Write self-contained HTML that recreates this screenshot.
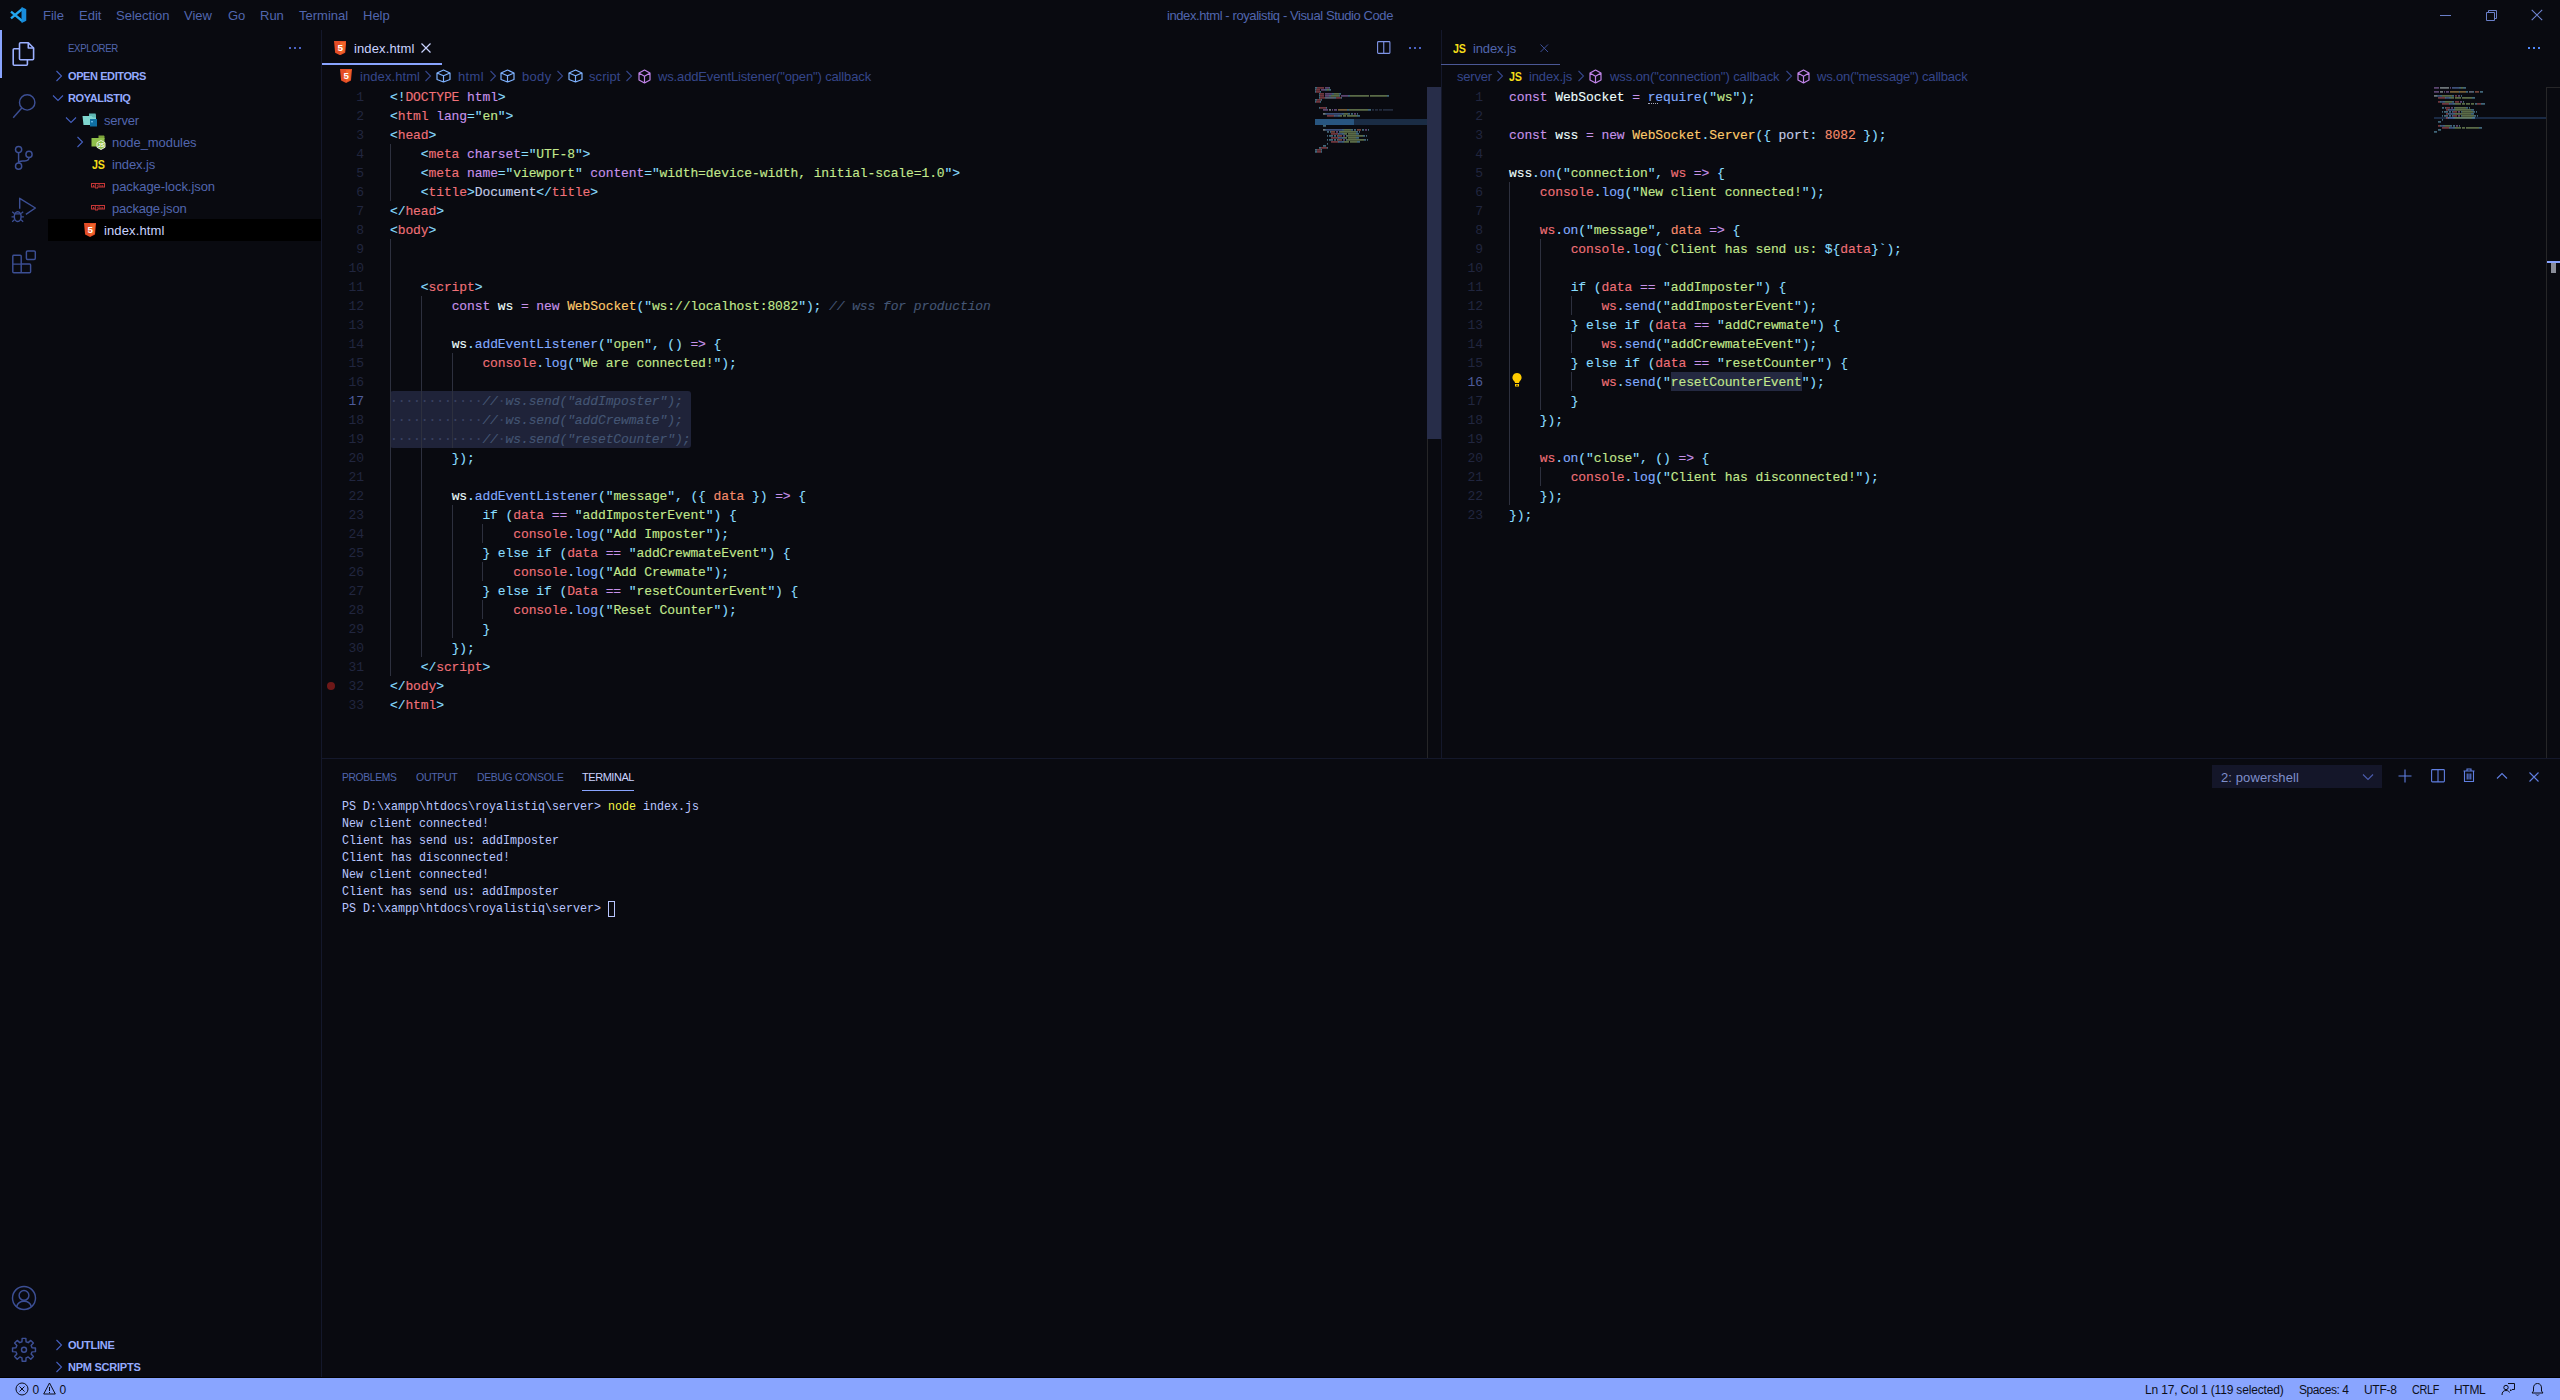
<!DOCTYPE html>
<html lang="en"><head><meta charset="utf-8"><title>index.html - royalistiq - Visual Studio Code</title>
<style>
*{margin:0;padding:0;box-sizing:border-box}
html,body{width:2560px;height:1400px;overflow:hidden;background:#090a10}
body{font-family:"Liberation Sans",sans-serif;font-size:13px;color:#5166ae;position:relative}
#r{position:absolute;left:0;top:0;width:2560px;height:1400px;overflow:hidden}
#r div,#r span,#r svg,#r pre{position:absolute;white-space:pre}
i{font-style:normal}
.ui{font-size:13px}
.b11{font-size:11px;font-weight:bold;color:#94aaff}
.s11{font-size:11px}
.s12{font-size:12px}
pre.code{font-family:"Liberation Mono",monospace;font-size:13px;letter-spacing:-0.1px;line-height:19px;color:#c5cde8;-webkit-text-stroke:0.120px}
pre.ln{font-family:"Liberation Mono",monospace;font-size:13px;letter-spacing:-0.1px;line-height:19px;color:#21263f;text-align:right;width:40px}
pre.ln i{color:#4e5c9c}
pre.term{font-family:"Liberation Mono",monospace;font-size:13.500px;line-height:17px;color:#b9c6ff;transform:scaleX(.8640);transform-origin:0 0}
.p{color:#89ddff}.r{color:#f07178}.k{color:#c792ea}.s{color:#c3e88d}.f{color:#82aaff}.y{color:#ffcb6b}
.n{color:#f78c6c}.w{color:#eeffff}.o{color:#f78c6c}.cm{color:#445674;font-style:italic}.t{color:#c5cde8}.ws{color:#3a4262}
</style></head>
<body><div id="r">
<span class="ui" style="left:43px;top:6px;line-height:20px;">File</span>
<span class="ui" style="left:79px;top:6px;line-height:20px;">Edit</span>
<span class="ui" style="left:116px;top:6px;line-height:20px;">Selection</span>
<span class="ui" style="left:184px;top:6px;line-height:20px;">View</span>
<span class="ui" style="left:228px;top:6px;line-height:20px;">Go</span>
<span class="ui" style="left:260px;top:6px;line-height:20px;">Run</span>
<span class="ui" style="left:299px;top:6px;line-height:20px;">Terminal</span>
<span class="ui" style="left:363px;top:6px;line-height:20px;">Help</span>
<span class="ui" style="left:1167px;top:6px;line-height:20px;letter-spacing:-0.409px;">index.html - royalistiq - Visual Studio Code</span>
<svg style="left:9px;top:6px;" width="18" height="18" viewBox="0 0 18 18"><path d="M13.200 3 2 12.300M13.200 15 2 5.700" stroke="#22a7f0" stroke-width="2.300" stroke-linecap="butt"/><path d="M12.600 1 17.200 3.200V14.800L12.600 17z" fill="#1f9cf0"/><path d="M12.600 1 17.200 3.200V14.800L12.600 17z" fill="#0c6fb8" opacity=".35"/></svg>
<svg style="left:2439px;top:9px;" width="12" height="12" viewBox="0 0 12 12"><path d="M1 6.500h11" stroke="#6a7fc8" stroke-width="1"/></svg>
<svg style="left:2485px;top:9px;" width="13" height="13" viewBox="0 0 13 13"><path d="M1.500 3.500h8v8h-8z M3.500 3.500v-2h8v8h-2" fill="none" stroke="#6a7fc8" stroke-width="1"/></svg>
<svg style="left:2531px;top:9px;" width="12" height="12" viewBox="0 0 12 12"><path d="M.700 .800l10.500 10.400M11.200 .800l-10.500 10.400" stroke="#7085d2" stroke-width="1.100"/></svg>
<div style="left:0px;top:30px;width:2px;height:48px;background:#89a4ff;"></div>
<svg style="left:0;top:30px" width="48" height="1348" viewBox="0 30 48 1348"><g fill="none" stroke="#9bb0ff" stroke-width="1.6" stroke-linejoin="round"><path d="M28.3 42.7h-7.800a1 1 0 0 0-1 1v15a1 1 0 0 0 1 1h12.100a1 1 0 0 0 1-1v-10.700z"/><path d="M28.300 42.700v5.300h5.300"/><path d="M19.500 48.700h-5.300a1 1 0 0 0-1 1v14.600a1 1 0 0 0 1 1h12.200a1 1 0 0 0 1-1v-4.600"/></g><g fill="none" stroke="#3c4f94" stroke-width="1.45"><circle cx="27.200" cy="102.400" r="7.700"/><path d="M21.800 108 13.200 117.700"/><circle cx="18.600" cy="149.600" r="3.100"/><circle cx="18.600" cy="166.200" r="3.100"/><circle cx="29" cy="154.400" r="3.100"/><path d="M18.600 152.800v10.200M29 157.600c0 2.600-1.800 3.300-4.300 3.300h-2c-2.200 0-4 .8-4 2.300"/><path d="M19.700 208.700V198.300L35.400 208 25.900 214.300" stroke-linejoin="round"/><ellipse cx="17.700" cy="216.600" rx="3.400" ry="4.900"/><path d="M14.600 213.800h6.200M14.300 213.500 12.200 211.700M14.200 216.800H11.500M14.400 219.800 12.200 221.800M21.100 213.500 23.200 211.700M21.200 216.800H23.900M21 219.800 23.200 221.800" stroke-width="1.200"/><path d="M13.800 255.300h6.400a1 1 0 0 1 1 1v7.800h8.400a1 1 0 0 1 1 1v6.600a1 1 0 0 1-1 1H13.800a1 1 0 0 1-1-1V256.300a1 1 0 0 1 1-1zM12.800 264.100h8.400v8.600"/><rect x="26.400" y="250.900" width="8.900" height="8.500" rx="1.200"/><circle cx="24" cy="1298" r="11.500"/><circle cx="24" cy="1295.400" r="4.900"/><path d="M16.600 1306.700c1-3.400 3.900-5.400 7.400-5.400s6.400 2 7.400 5.400"/><path d="M22.15 1338.35L25.85 1338.35L26.05 1341.76L28.23 1342.66L30.79 1340.40L33.40 1343.01L31.14 1345.57L32.04 1347.75L35.45 1347.95L35.45 1351.65L32.04 1351.85L31.14 1354.03L33.40 1356.59L30.79 1359.20L28.23 1356.94L26.05 1357.84L25.85 1361.25L22.15 1361.25L21.95 1357.84L19.77 1356.94L17.21 1359.20L14.60 1356.59L16.86 1354.03L15.96 1351.85L12.55 1351.65L12.55 1347.95L15.96 1347.75L16.86 1345.57L14.60 1343.01L17.21 1340.40L19.77 1342.66L21.95 1341.76Z" stroke-linejoin="round"/><circle cx="24" cy="1349.800" r="2.500"/></g></svg>
<div style="left:321px;top:30px;width:1px;height:1348px;background:#14182b;"></div>
<span class="s11" style="left:68px;top:38px;line-height:20px;letter-spacing:-0.35px;transform:scaleX(0.8755);transform-origin:0 50%;">EXPLORER</span>
<svg style="left:289px;top:46.5px;" width="13" height="2" viewBox="0 0 13 2"><path d="M0 1h2M5 1h2M10 1h2" stroke="#4a62c4" stroke-width="1.800"/></svg>
<svg style="left:55px;top:70px;" width="8" height="12" viewBox="0 0 8 12"><path d="M1.500 1 6.500 6 1.500 11" fill="none" stroke="#4560c0" stroke-width="1.1"/></svg>
<span class="b11" style="left:68px;top:66px;line-height:20px;letter-spacing:-0.410px;">OPEN EDITORS</span>
<svg style="left:52px;top:94px;" width="12" height="8" viewBox="0 0 12 8"><path d="M1 1.500 6 6.500 11 1.500" fill="none" stroke="#4560c0" stroke-width="1.1"/></svg>
<span class="b11" style="left:68px;top:88px;line-height:20px;letter-spacing:-0.372px;">ROYALISTIQ</span>
<svg style="left:65px;top:116px;" width="12" height="8" viewBox="0 0 12 8"><path d="M1 1.500 6 6.500 11 1.500" fill="none" stroke="#4560c0" stroke-width="1.1"/></svg>
<span class="ui" style="left:104px;top:111px;line-height:20px;letter-spacing:-0.186px;">server</span>
<svg style="left:76px;top:136px;" width="8" height="12" viewBox="0 0 8 12"><path d="M1.500 1 6.500 6 1.500 11" fill="none" stroke="#4560c0" stroke-width="1.1"/></svg>
<span class="ui" style="left:112px;top:133px;line-height:20px;letter-spacing:-0.066px;">node_modules</span>
<span class="ui" style="left:112px;top:155px;line-height:20px;letter-spacing:-0.135px;">index.js</span>
<span class="ui" style="left:112px;top:177px;line-height:20px;letter-spacing:-0.062px;">package-lock.json</span>
<span class="ui" style="left:112px;top:199px;line-height:20px;letter-spacing:-0.176px;">package.json</span>
<div style="left:48px;top:219px;width:273px;height:22px;background:#000000;"></div>
<span class="ui" style="left:104px;top:221px;line-height:20px;color:#c9d3ff;letter-spacing:0.125px;">index.html</span>
<svg style="left:55px;top:1339px;" width="8" height="12" viewBox="0 0 8 12"><path d="M1.500 1 6.500 6 1.500 11" fill="none" stroke="#4560c0" stroke-width="1.1"/></svg>
<span class="b11" style="left:68px;top:1335px;line-height:20px;letter-spacing:-0.254px;">OUTLINE</span>
<svg style="left:55px;top:1361px;" width="8" height="12" viewBox="0 0 8 12"><path d="M1.500 1 6.500 6 1.500 11" fill="none" stroke="#4560c0" stroke-width="1.1"/></svg>
<span class="b11" style="left:68px;top:1357px;line-height:20px;letter-spacing:-0.243px;">NPM SCRIPTS</span>
<svg style="left:82px;top:112px;" width="16" height="15" viewBox="0 0 16 15"><path d="M7 1.500h6.500l.5 1.500v3H7z" fill="#5fb7b3"/><path d="M.500 4h9l1.500 1.500h3v7.500H1.500z" fill="#7fd6cf"/><path d="M8 7h7v7.500H8z" fill="#0f6fa3"/><rect x="9.300" y="9" width="1.400" height="1.400" fill="#8ad4ff"/></svg>
<svg style="left:91px;top:134px;" width="16" height="16" viewBox="0 0 16 16"><path d="M7.500 1.500H13l.5 1v2.500h-6z" fill="#7da23a"/><path d="M.500 4h13v8.500H.500z" fill="#8fc04b"/><path d="M10 6.500l4 2.200v4.600l-4 2.200-4-2.200V8.700z" fill="#8fc04b" stroke="#e8f0d8" stroke-width="1"/><text x="10" y="13" font-size="5" font-family="Liberation Sans,sans-serif" font-weight="bold" text-anchor="middle" fill="#fff">JS</text></svg>
<span class="" style="left:92px;top:155px;line-height:20px;font-size:12px;font-weight:bold;color:#f5de19;letter-spacing:-0.35px;transform:scaleX(0.8943);transform-origin:0 50%;">JS</span>
<svg style="left:91px;top:183px;" width="14" height="6" viewBox="0 0 14 6"><path d="M0 0h14v4.500H7v1H4v-1H0z" fill="#c63636"/><path d="M1 1h2.800v2.600h-.9V1.900h-.9v1.700H1z M4.800 1h2.800v2.600H6.200v.9H4.800z M8.500 1H13v2.600h-.9V1.900h-.8v1.700h-.9V1.900h-.9v1.700h-1z" fill="#090a10"/><rect x="5.900" y="1.900" width=".8" height=".9" fill="#c63636"/></svg>
<svg style="left:91px;top:205px;" width="14" height="6" viewBox="0 0 14 6"><path d="M0 0h14v4.500H7v1H4v-1H0z" fill="#c63636"/><path d="M1 1h2.800v2.600h-.9V1.900h-.9v1.700H1z M4.800 1h2.800v2.600H6.200v.9H4.800z M8.500 1H13v2.600h-.9V1.900h-.8v1.700h-.9V1.900h-.9v1.700h-1z" fill="#090a10"/><rect x="5.900" y="1.900" width=".8" height=".9" fill="#c63636"/></svg>
<svg style="left:84px;top:223px;" width="12.09" height="13.95" viewBox="0 0 13 15"><path d="M0 0h13l-1.200 12.500L6.500 15 1.200 12.500z" fill="#e44d26"/><path d="M6.500 1v12.800l4.300-2.100L11.800 1z" fill="#f16529"/><text x="6.600" y="11" font-family="Liberation Sans,sans-serif" font-weight="bold" font-size="10.500" text-anchor="middle" fill="#fff">5</text></svg>
<div style="left:322px;top:63px;width:120px;height:2px;background:#89a4ff;"></div>
<svg style="left:334px;top:41px;" width="12.35" height="14.25" viewBox="0 0 13 15"><path d="M0 0h13l-1.200 12.500L6.500 15 1.200 12.500z" fill="#e44d26"/><path d="M6.500 1v12.800l4.300-2.100L11.800 1z" fill="#f16529"/><text x="6.600" y="11" font-family="Liberation Sans,sans-serif" font-weight="bold" font-size="10.500" text-anchor="middle" fill="#fff">5</text></svg>
<span class="ui" style="left:354px;top:39px;line-height:20px;color:#c9d3ff;letter-spacing:0.125px;">index.html</span>
<svg style="left:421px;top:43px;" width="10" height="10" viewBox="0 0 10 10"><path d="M.500 .500l9 9M9.500 .500l-9 9" stroke="#c9d3ff" stroke-width="1.200"/></svg>
<svg style="left:1377px;top:41px;" width="14" height="13" viewBox="0 0 14 13"><rect x=".600" y=".600" width="12.300" height="11.800" rx=".8" fill="none" stroke="#7f95e8" stroke-width="1.1"/><path d="M6.750 .600v11.800" stroke="#7f95e8" stroke-width="1.1"/></svg>
<svg style="left:1409px;top:47px;" width="13" height="2" viewBox="0 0 13 2"><path d="M0 1h2M5 1h2M10 1h2" stroke="#4a62c4" stroke-width="1.800"/></svg>
<svg style="left:340px;top:69px;" width="12.09" height="13.95" viewBox="0 0 13 15"><path d="M0 0h13l-1.200 12.500L6.500 15 1.200 12.500z" fill="#e44d26"/><path d="M6.500 1v12.800l4.300-2.100L11.800 1z" fill="#f16529"/><text x="6.600" y="11" font-family="Liberation Sans,sans-serif" font-weight="bold" font-size="10.500" text-anchor="middle" fill="#fff">5</text></svg>
<span class="ui" style="left:360px;top:67px;line-height:20px;color:#35468a;letter-spacing:0.075px;">index.html</span>
<svg style="left:424px;top:70px;" width="8" height="12" viewBox="0 0 8 12"><path d="M1.500 1 6.500 6 1.500 11" fill="none" stroke="#35468a" stroke-width="1.1"/></svg>
<svg style="left:436px;top:69px;" width="15" height="14" viewBox="0 0 15 14"><path d="M7.500 1 14 4v6.500L7.500 13 1 10.500V4z M1 4l6.500 2.800L14 4 M7.500 6.800V13" fill="none" stroke="#7fb2ff" stroke-width="1.200" stroke-linejoin="round"/></svg>
<span class="ui" style="left:458px;top:67px;line-height:20px;color:#35468a;letter-spacing:0.360px;">html</span>
<svg style="left:489px;top:70px;" width="8" height="12" viewBox="0 0 8 12"><path d="M1.500 1 6.500 6 1.500 11" fill="none" stroke="#35468a" stroke-width="1.1"/></svg>
<svg style="left:500px;top:69px;" width="15" height="14" viewBox="0 0 15 14"><path d="M7.500 1 14 4v6.500L7.500 13 1 10.500V4z M1 4l6.500 2.800L14 4 M7.500 6.800V13" fill="none" stroke="#7fb2ff" stroke-width="1.200" stroke-linejoin="round"/></svg>
<span class="ui" style="left:522px;top:67px;line-height:20px;color:#35468a;letter-spacing:0.327px;">body</span>
<svg style="left:556px;top:70px;" width="8" height="12" viewBox="0 0 8 12"><path d="M1.500 1 6.500 6 1.500 11" fill="none" stroke="#35468a" stroke-width="1.1"/></svg>
<svg style="left:568px;top:69px;" width="15" height="14" viewBox="0 0 15 14"><path d="M7.500 1 14 4v6.500L7.500 13 1 10.500V4z M1 4l6.500 2.800L14 4 M7.500 6.800V13" fill="none" stroke="#7fb2ff" stroke-width="1.200" stroke-linejoin="round"/></svg>
<span class="ui" style="left:589px;top:67px;line-height:20px;color:#35468a;letter-spacing:0.073px;">script</span>
<svg style="left:625px;top:70px;" width="8" height="12" viewBox="0 0 8 12"><path d="M1.500 1 6.500 6 1.500 11" fill="none" stroke="#35468a" stroke-width="1.1"/></svg>
<svg style="left:638px;top:68.5px;" width="13" height="15" viewBox="0 0 13 15"><path d="M6.500 1l5.500 3.100v6.800L6.500 14 1 10.900V4.100z M1 4.100l5.500 3.200 5.500-3.200 M6.500 7.300V14" fill="none" stroke="#c084e8" stroke-width="1.200" stroke-linejoin="round"/></svg>
<span class="ui" style="left:658px;top:67px;line-height:20px;color:#35468a;letter-spacing:-0.141px;">ws.addEventListener("open") callback</span>
<div style="left:390px;top:391px;width:301px;height:57px;background:#1f2339;border-radius:3px"></div>
<div style="left:390px;top:144px;width:1px;height:57px;background:#2d303e;"></div>
<div style="left:390px;top:239px;width:1px;height:437px;background:#2d303e;"></div>
<div style="left:421px;top:296px;width:1px;height:361px;background:#2d303e;"></div>
<div style="left:452px;top:353px;width:1px;height:95px;background:#2d303e;"></div>
<div style="left:452px;top:505px;width:1px;height:133px;background:#2d303e;"></div>
<div style="left:482px;top:524px;width:1px;height:19px;background:#2d303e;"></div>
<div style="left:482px;top:562px;width:1px;height:19px;background:#2d303e;"></div>
<div style="left:482px;top:600px;width:1px;height:19px;background:#2d303e;"></div>
<pre class="code" style="left:390px;top:88px"><i class="p">&lt;!</i><i class="r">DOCTYPE</i> <i class="k">html</i><i class="p">&gt;</i>
<i class="p">&lt;</i><i class="r">html</i> <i class="k">lang</i><i class="p">="</i><i class="s">en</i><i class="p">"&gt;</i>
<i class="p">&lt;</i><i class="r">head</i><i class="p">&gt;</i>
    <i class="p">&lt;</i><i class="r">meta</i> <i class="k">charset</i><i class="p">="</i><i class="s">UTF-8</i><i class="p">"&gt;</i>
    <i class="p">&lt;</i><i class="r">meta</i> <i class="k">name</i><i class="p">="</i><i class="s">viewport</i><i class="p">"</i> <i class="k">content</i><i class="p">="</i><i class="s">width=device-width, initial-scale=1.0</i><i class="p">"&gt;</i>
    <i class="p">&lt;</i><i class="r">title</i><i class="p">&gt;</i><i class="t">Document</i><i class="p">&lt;/</i><i class="r">title</i><i class="p">&gt;</i>
<i class="p">&lt;/</i><i class="r">head</i><i class="p">&gt;</i>
<i class="p">&lt;</i><i class="r">body</i><i class="p">&gt;</i>


    <i class="p">&lt;</i><i class="r">script</i><i class="p">&gt;</i>
        <i class="k">const</i> <i class="w">ws</i> <i class="k">=</i> <i class="k">new</i> <i class="y">WebSocket</i><i class="p">("</i><i class="s">ws://localhost:8082</i><i class="p">");</i> <i class="cm">// wss for production</i>

        <i class="w">ws</i><i class="p">.</i><i class="f">addEventListener</i><i class="p">("</i><i class="s">open</i><i class="p">",</i> <i class="p">()</i> <i class="k">=&gt;</i> <i class="p">{</i>
            <i class="r">console</i><i class="p">.</i><i class="f">log</i><i class="p">("</i><i class="s">We are connected!</i><i class="p">");</i>

<i class="ws">············</i><i class="cm">//</i><i class="ws">·</i><i class="cm">ws.send("addImposter");</i>
<i class="ws">············</i><i class="cm">//</i><i class="ws">·</i><i class="cm">ws.send("addCrewmate");</i>
<i class="ws">············</i><i class="cm">//</i><i class="ws">·</i><i class="cm">ws.send("resetCounter");</i>
        <i class="p">});</i>

        <i class="w">ws</i><i class="p">.</i><i class="f">addEventListener</i><i class="p">("</i><i class="s">message</i><i class="p">",</i> <i class="p">({</i> <i class="o">data</i> <i class="p">})</i> <i class="k">=&gt;</i> <i class="p">{</i>
            <i class="p">if</i> <i class="p">(</i><i class="r">data</i> <i class="k">==</i> <i class="p">"</i><i class="s">addImposterEvent</i><i class="p">")</i> <i class="p">{</i>
                <i class="r">console</i><i class="p">.</i><i class="f">log</i><i class="p">("</i><i class="s">Add Imposter</i><i class="p">");</i>
            <i class="p">}</i> <i class="p">else</i> <i class="p">if</i> <i class="p">(</i><i class="r">data</i> <i class="k">==</i> <i class="p">"</i><i class="s">addCrewmateEvent</i><i class="p">")</i> <i class="p">{</i>
                <i class="r">console</i><i class="p">.</i><i class="f">log</i><i class="p">("</i><i class="s">Add Crewmate</i><i class="p">");</i>
            <i class="p">}</i> <i class="p">else</i> <i class="p">if</i> <i class="p">(</i><i class="r">Data</i> <i class="k">==</i> <i class="p">"</i><i class="s">resetCounterEvent</i><i class="p">")</i> <i class="p">{</i>
                <i class="r">console</i><i class="p">.</i><i class="f">log</i><i class="p">("</i><i class="s">Reset Counter</i><i class="p">");</i>
            <i class="p">}</i>
        <i class="p">});</i>
    <i class="p">&lt;/</i><i class="r">script</i><i class="p">&gt;</i>
<i class="p">&lt;/</i><i class="r">body</i><i class="p">&gt;</i>
<i class="p">&lt;/</i><i class="r">html</i><i class="p">&gt;</i></pre>
<pre class="ln" style="left:324px;top:88px">1
2
3
4
5
6
7
8
9
10
11
12
13
14
15
16
<i>17</i>
18
19
20
21
22
23
24
25
26
27
28
29
30
31
32
33</pre>
<div style="left:327px;top:682px;width:8px;height:8px;border-radius:4px;background:#6e1818"></div>
<svg style="left:1315px;top:87px;" width="112" height="70" viewBox="0 0 112 70"><g opacity=".55"><rect x="0" y="0.2" width="2" height="1.400" fill="#89ddff"/><rect x="2" y="0.2" width="7" height="1.400" fill="#f07178"/><rect x="10" y="0.2" width="4" height="1.400" fill="#c792ea"/><rect x="14" y="0.2" width="1" height="1.400" fill="#89ddff"/><rect x="0" y="2.2" width="1" height="1.400" fill="#89ddff"/><rect x="1" y="2.2" width="4" height="1.400" fill="#f07178"/><rect x="6" y="2.2" width="4" height="1.400" fill="#c792ea"/><rect x="10" y="2.2" width="1" height="1.400" fill="#89ddff"/><rect x="11" y="2.2" width="1" height="1.400" fill="#89ddff"/><rect x="12" y="2.2" width="2" height="1.400" fill="#c3e88d"/><rect x="14" y="2.2" width="1" height="1.400" fill="#89ddff"/><rect x="15" y="2.2" width="1" height="1.400" fill="#89ddff"/><rect x="0" y="4.2" width="1" height="1.400" fill="#89ddff"/><rect x="1" y="4.2" width="4" height="1.400" fill="#f07178"/><rect x="5" y="4.2" width="1" height="1.400" fill="#89ddff"/><rect x="4" y="6.2" width="1" height="1.400" fill="#89ddff"/><rect x="5" y="6.2" width="4" height="1.400" fill="#f07178"/><rect x="10" y="6.2" width="7" height="1.400" fill="#c792ea"/><rect x="17" y="6.2" width="1" height="1.400" fill="#89ddff"/><rect x="18" y="6.2" width="1" height="1.400" fill="#89ddff"/><rect x="19" y="6.2" width="5" height="1.400" fill="#c3e88d"/><rect x="24" y="6.2" width="1" height="1.400" fill="#89ddff"/><rect x="25" y="6.2" width="1" height="1.400" fill="#89ddff"/><rect x="4" y="8.2" width="1" height="1.400" fill="#89ddff"/><rect x="5" y="8.2" width="4" height="1.400" fill="#f07178"/><rect x="10" y="8.2" width="4" height="1.400" fill="#c792ea"/><rect x="14" y="8.2" width="1" height="1.400" fill="#89ddff"/><rect x="15" y="8.2" width="1" height="1.400" fill="#89ddff"/><rect x="16" y="8.2" width="8" height="1.400" fill="#c3e88d"/><rect x="24" y="8.2" width="1" height="1.400" fill="#89ddff"/><rect x="26" y="8.2" width="7" height="1.400" fill="#c792ea"/><rect x="33" y="8.2" width="1" height="1.400" fill="#89ddff"/><rect x="34" y="8.2" width="1" height="1.400" fill="#89ddff"/><rect x="35" y="8.2" width="19" height="1.400" fill="#c3e88d"/><rect x="55" y="8.2" width="17" height="1.400" fill="#c3e88d"/><rect x="72" y="8.2" width="1" height="1.400" fill="#89ddff"/><rect x="73" y="8.2" width="1" height="1.400" fill="#89ddff"/><rect x="4" y="10.2" width="1" height="1.400" fill="#89ddff"/><rect x="5" y="10.2" width="5" height="1.400" fill="#f07178"/><rect x="10" y="10.2" width="1" height="1.400" fill="#89ddff"/><rect x="11" y="10.2" width="8" height="1.400" fill="#c5cde8"/><rect x="19" y="10.2" width="2" height="1.400" fill="#89ddff"/><rect x="21" y="10.2" width="5" height="1.400" fill="#f07178"/><rect x="26" y="10.2" width="1" height="1.400" fill="#89ddff"/><rect x="0" y="12.2" width="2" height="1.400" fill="#89ddff"/><rect x="2" y="12.2" width="4" height="1.400" fill="#f07178"/><rect x="6" y="12.2" width="1" height="1.400" fill="#89ddff"/><rect x="0" y="14.2" width="1" height="1.400" fill="#89ddff"/><rect x="1" y="14.2" width="4" height="1.400" fill="#f07178"/><rect x="5" y="14.2" width="1" height="1.400" fill="#89ddff"/><rect x="4" y="20.2" width="1" height="1.400" fill="#89ddff"/><rect x="5" y="20.2" width="6" height="1.400" fill="#f07178"/><rect x="11" y="20.2" width="1" height="1.400" fill="#89ddff"/><rect x="8" y="22.2" width="5" height="1.400" fill="#c792ea"/><rect x="14" y="22.2" width="2" height="1.400" fill="#eeffff"/><rect x="17" y="22.2" width="1" height="1.400" fill="#c792ea"/><rect x="19" y="22.2" width="3" height="1.400" fill="#c792ea"/><rect x="23" y="22.2" width="9" height="1.400" fill="#ffcb6b"/><rect x="32" y="22.2" width="1" height="1.400" fill="#89ddff"/><rect x="33" y="22.2" width="1" height="1.400" fill="#89ddff"/><rect x="34" y="22.2" width="19" height="1.400" fill="#c3e88d"/><rect x="53" y="22.2" width="1" height="1.400" fill="#89ddff"/><rect x="54" y="22.2" width="1" height="1.400" fill="#89ddff"/><rect x="55" y="22.2" width="1" height="1.400" fill="#89ddff"/><rect x="57" y="22.2" width="2" height="1.400" fill="#445674"/><rect x="60" y="22.2" width="3" height="1.400" fill="#445674"/><rect x="64" y="22.2" width="3" height="1.400" fill="#445674"/><rect x="68" y="22.2" width="10" height="1.400" fill="#445674"/><rect x="8" y="26.2" width="2" height="1.400" fill="#eeffff"/><rect x="10" y="26.2" width="1" height="1.400" fill="#89ddff"/><rect x="11" y="26.2" width="16" height="1.400" fill="#82aaff"/><rect x="27" y="26.2" width="1" height="1.400" fill="#89ddff"/><rect x="28" y="26.2" width="1" height="1.400" fill="#89ddff"/><rect x="29" y="26.2" width="4" height="1.400" fill="#c3e88d"/><rect x="33" y="26.2" width="1" height="1.400" fill="#89ddff"/><rect x="34" y="26.2" width="1" height="1.400" fill="#89ddff"/><rect x="36" y="26.2" width="1" height="1.400" fill="#89ddff"/><rect x="37" y="26.2" width="1" height="1.400" fill="#89ddff"/><rect x="39" y="26.2" width="2" height="1.400" fill="#c792ea"/><rect x="42" y="26.2" width="1" height="1.400" fill="#89ddff"/><rect x="12" y="28.2" width="7" height="1.400" fill="#f07178"/><rect x="19" y="28.2" width="1" height="1.400" fill="#89ddff"/><rect x="20" y="28.2" width="3" height="1.400" fill="#82aaff"/><rect x="23" y="28.2" width="1" height="1.400" fill="#89ddff"/><rect x="24" y="28.2" width="1" height="1.400" fill="#89ddff"/><rect x="25" y="28.2" width="2" height="1.400" fill="#c3e88d"/><rect x="28" y="28.2" width="3" height="1.400" fill="#c3e88d"/><rect x="32" y="28.2" width="10" height="1.400" fill="#c3e88d"/><rect x="42" y="28.2" width="1" height="1.400" fill="#89ddff"/><rect x="43" y="28.2" width="1" height="1.400" fill="#89ddff"/><rect x="44" y="28.2" width="1" height="1.400" fill="#89ddff"/><rect x="12" y="32.2" width="2" height="1.400" fill="#445674"/><rect x="15" y="32.2" width="23" height="1.400" fill="#445674"/><rect x="12" y="34.2" width="2" height="1.400" fill="#445674"/><rect x="15" y="34.2" width="23" height="1.400" fill="#445674"/><rect x="12" y="36.2" width="2" height="1.400" fill="#445674"/><rect x="15" y="36.2" width="24" height="1.400" fill="#445674"/><rect x="8" y="38.2" width="1" height="1.400" fill="#89ddff"/><rect x="9" y="38.2" width="1" height="1.400" fill="#89ddff"/><rect x="10" y="38.2" width="1" height="1.400" fill="#89ddff"/><rect x="8" y="42.2" width="2" height="1.400" fill="#eeffff"/><rect x="10" y="42.2" width="1" height="1.400" fill="#89ddff"/><rect x="11" y="42.2" width="16" height="1.400" fill="#82aaff"/><rect x="27" y="42.2" width="1" height="1.400" fill="#89ddff"/><rect x="28" y="42.2" width="1" height="1.400" fill="#89ddff"/><rect x="29" y="42.2" width="7" height="1.400" fill="#c3e88d"/><rect x="36" y="42.2" width="1" height="1.400" fill="#89ddff"/><rect x="37" y="42.2" width="1" height="1.400" fill="#89ddff"/><rect x="39" y="42.2" width="1" height="1.400" fill="#89ddff"/><rect x="40" y="42.2" width="1" height="1.400" fill="#89ddff"/><rect x="42" y="42.2" width="4" height="1.400" fill="#f78c6c"/><rect x="47" y="42.2" width="1" height="1.400" fill="#89ddff"/><rect x="48" y="42.2" width="1" height="1.400" fill="#89ddff"/><rect x="50" y="42.2" width="2" height="1.400" fill="#c792ea"/><rect x="53" y="42.2" width="1" height="1.400" fill="#89ddff"/><rect x="12" y="44.2" width="2" height="1.400" fill="#89ddff"/><rect x="15" y="44.2" width="1" height="1.400" fill="#89ddff"/><rect x="16" y="44.2" width="4" height="1.400" fill="#f78c6c"/><rect x="21" y="44.2" width="2" height="1.400" fill="#c792ea"/><rect x="24" y="44.2" width="1" height="1.400" fill="#89ddff"/><rect x="25" y="44.2" width="16" height="1.400" fill="#c3e88d"/><rect x="41" y="44.2" width="1" height="1.400" fill="#89ddff"/><rect x="42" y="44.2" width="1" height="1.400" fill="#89ddff"/><rect x="44" y="44.2" width="1" height="1.400" fill="#89ddff"/><rect x="16" y="46.2" width="7" height="1.400" fill="#f07178"/><rect x="23" y="46.2" width="1" height="1.400" fill="#89ddff"/><rect x="24" y="46.2" width="3" height="1.400" fill="#82aaff"/><rect x="27" y="46.2" width="1" height="1.400" fill="#89ddff"/><rect x="28" y="46.2" width="1" height="1.400" fill="#89ddff"/><rect x="29" y="46.2" width="3" height="1.400" fill="#c3e88d"/><rect x="33" y="46.2" width="8" height="1.400" fill="#c3e88d"/><rect x="41" y="46.2" width="1" height="1.400" fill="#89ddff"/><rect x="42" y="46.2" width="1" height="1.400" fill="#89ddff"/><rect x="43" y="46.2" width="1" height="1.400" fill="#89ddff"/><rect x="12" y="48.2" width="1" height="1.400" fill="#89ddff"/><rect x="14" y="48.2" width="4" height="1.400" fill="#89ddff"/><rect x="19" y="48.2" width="2" height="1.400" fill="#89ddff"/><rect x="22" y="48.2" width="1" height="1.400" fill="#89ddff"/><rect x="23" y="48.2" width="4" height="1.400" fill="#f78c6c"/><rect x="28" y="48.2" width="2" height="1.400" fill="#c792ea"/><rect x="31" y="48.2" width="1" height="1.400" fill="#89ddff"/><rect x="32" y="48.2" width="16" height="1.400" fill="#c3e88d"/><rect x="48" y="48.2" width="1" height="1.400" fill="#89ddff"/><rect x="49" y="48.2" width="1" height="1.400" fill="#89ddff"/><rect x="51" y="48.2" width="1" height="1.400" fill="#89ddff"/><rect x="16" y="50.2" width="7" height="1.400" fill="#f07178"/><rect x="23" y="50.2" width="1" height="1.400" fill="#89ddff"/><rect x="24" y="50.2" width="3" height="1.400" fill="#82aaff"/><rect x="27" y="50.2" width="1" height="1.400" fill="#89ddff"/><rect x="28" y="50.2" width="1" height="1.400" fill="#89ddff"/><rect x="29" y="50.2" width="3" height="1.400" fill="#c3e88d"/><rect x="33" y="50.2" width="8" height="1.400" fill="#c3e88d"/><rect x="41" y="50.2" width="1" height="1.400" fill="#89ddff"/><rect x="42" y="50.2" width="1" height="1.400" fill="#89ddff"/><rect x="43" y="50.2" width="1" height="1.400" fill="#89ddff"/><rect x="12" y="52.2" width="1" height="1.400" fill="#89ddff"/><rect x="14" y="52.2" width="4" height="1.400" fill="#89ddff"/><rect x="19" y="52.2" width="2" height="1.400" fill="#89ddff"/><rect x="22" y="52.2" width="1" height="1.400" fill="#89ddff"/><rect x="23" y="52.2" width="4" height="1.400" fill="#f78c6c"/><rect x="28" y="52.2" width="2" height="1.400" fill="#c792ea"/><rect x="31" y="52.2" width="1" height="1.400" fill="#89ddff"/><rect x="32" y="52.2" width="17" height="1.400" fill="#c3e88d"/><rect x="49" y="52.2" width="1" height="1.400" fill="#89ddff"/><rect x="50" y="52.2" width="1" height="1.400" fill="#89ddff"/><rect x="52" y="52.2" width="1" height="1.400" fill="#89ddff"/><rect x="16" y="54.2" width="7" height="1.400" fill="#f07178"/><rect x="23" y="54.2" width="1" height="1.400" fill="#89ddff"/><rect x="24" y="54.2" width="3" height="1.400" fill="#82aaff"/><rect x="27" y="54.2" width="1" height="1.400" fill="#89ddff"/><rect x="28" y="54.2" width="1" height="1.400" fill="#89ddff"/><rect x="29" y="54.2" width="5" height="1.400" fill="#c3e88d"/><rect x="35" y="54.2" width="7" height="1.400" fill="#c3e88d"/><rect x="42" y="54.2" width="1" height="1.400" fill="#89ddff"/><rect x="43" y="54.2" width="1" height="1.400" fill="#89ddff"/><rect x="44" y="54.2" width="1" height="1.400" fill="#89ddff"/><rect x="12" y="56.2" width="1" height="1.400" fill="#89ddff"/><rect x="8" y="58.2" width="1" height="1.400" fill="#89ddff"/><rect x="9" y="58.2" width="1" height="1.400" fill="#89ddff"/><rect x="10" y="58.2" width="1" height="1.400" fill="#89ddff"/><rect x="4" y="60.2" width="2" height="1.400" fill="#89ddff"/><rect x="6" y="60.2" width="6" height="1.400" fill="#f07178"/><rect x="12" y="60.2" width="1" height="1.400" fill="#89ddff"/><rect x="0" y="62.2" width="2" height="1.400" fill="#89ddff"/><rect x="2" y="62.2" width="4" height="1.400" fill="#f07178"/><rect x="6" y="62.2" width="1" height="1.400" fill="#89ddff"/><rect x="0" y="64.2" width="2" height="1.400" fill="#89ddff"/><rect x="2" y="64.2" width="4" height="1.400" fill="#f07178"/><rect x="6" y="64.2" width="1" height="1.400" fill="#89ddff"/></g></svg>
<div style="left:1315px;top:119px;width:112px;height:6px;background:#1a2c44;"></div>
<div style="left:1315px;top:119px;width:38.5px;height:6px;background:#28557f;"></div>
<div style="left:1427px;top:87px;width:1px;height:671px;background:#262628;"></div>
<div style="left:1427px;top:87px;width:14px;height:352px;background:#272d49;"></div>
<div style="left:1441px;top:30px;width:1px;height:728px;background:#14182b;"></div>
<div style="left:1441px;top:63.5px;width:119px;height:1.5px;background:#4b5896;"></div>
<span class="" style="left:1453px;top:39px;line-height:20px;font-size:12px;font-weight:bold;color:#f5de19;letter-spacing:-0.35px;transform:scaleX(0.8943);transform-origin:0 50%;">JS</span>
<span class="ui" style="left:1473px;top:39px;line-height:20px;letter-spacing:-0.135px;">index.js</span>
<svg style="left:1540px;top:44px;" width="9" height="9" viewBox="0 0 9 9"><path d="M.500 .500l7.500 7.500M8 .500l-7.500 7.500" stroke="#3d4f96" stroke-width="1"/></svg>
<svg style="left:2528px;top:47px;" width="13" height="2" viewBox="0 0 13 2"><path d="M0 1h2M5 1h2M10 1h2" stroke="#4f86f7" stroke-width="1.800"/></svg>
<span class="ui" style="left:1457px;top:67px;line-height:20px;color:#35468a;letter-spacing:-0.186px;">server</span>
<svg style="left:1496px;top:70px;" width="8" height="12" viewBox="0 0 8 12"><path d="M1.500 1 6.500 6 1.500 11" fill="none" stroke="#35468a" stroke-width="1.1"/></svg>
<span class="" style="left:1509px;top:67px;line-height:20px;font-size:12px;font-weight:bold;color:#f5de19;letter-spacing:-0.35px;transform:scaleX(0.8943);transform-origin:0 50%;">JS</span>
<span class="ui" style="left:1529px;top:67px;line-height:20px;color:#35468a;letter-spacing:-0.135px;">index.js</span>
<svg style="left:1577px;top:70px;" width="8" height="12" viewBox="0 0 8 12"><path d="M1.500 1 6.500 6 1.500 11" fill="none" stroke="#35468a" stroke-width="1.1"/></svg>
<svg style="left:1589px;top:68.5px;" width="13" height="15" viewBox="0 0 13 15"><path d="M6.500 1l5.500 3.100v6.800L6.500 14 1 10.900V4.100z M1 4.100l5.500 3.200 5.500-3.200 M6.500 7.300V14" fill="none" stroke="#c084e8" stroke-width="1.200" stroke-linejoin="round"/></svg>
<span class="ui" style="left:1610px;top:67px;line-height:20px;color:#35468a;letter-spacing:-0.080px;">wss.on("connection") callback</span>
<svg style="left:1785px;top:70px;" width="8" height="12" viewBox="0 0 8 12"><path d="M1.500 1 6.500 6 1.500 11" fill="none" stroke="#35468a" stroke-width="1.1"/></svg>
<svg style="left:1797px;top:68.5px;" width="13" height="15" viewBox="0 0 13 15"><path d="M6.500 1l5.500 3.100v6.800L6.500 14 1 10.900V4.100z M1 4.100l5.500 3.200 5.500-3.200 M6.500 7.300V14" fill="none" stroke="#c084e8" stroke-width="1.200" stroke-linejoin="round"/></svg>
<span class="ui" style="left:1817px;top:67px;line-height:20px;color:#35468a;letter-spacing:-0.187px;">ws.on("message") callback</span>
<div style="left:1671px;top:372px;width:131px;height:19px;background:#242941;"></div>
<div style="left:1509px;top:182px;width:1px;height:323px;background:#2d303e;"></div>
<div style="left:1540px;top:239px;width:1px;height:171px;background:#2d303e;"></div>
<div style="left:1540px;top:467px;width:1px;height:19px;background:#2d303e;"></div>
<div style="left:1571px;top:296px;width:1px;height:19px;background:#2d303e;"></div>
<div style="left:1571px;top:334px;width:1px;height:19px;background:#2d303e;"></div>
<div style="left:1571px;top:372px;width:1px;height:19px;background:#2d303e;"></div>
<pre class="code" style="left:1509px;top:88px"><i class="k">const</i> <i class="w">WebSocket</i> <i class="k">=</i> <i class="f">require</i><i class="p">("</i><i class="s">ws</i><i class="p">");</i>

<i class="k">const</i> <i class="w">wss</i> <i class="k">=</i> <i class="k">new</i> <i class="y">WebSocket</i><i class="p">.</i><i class="y">Server</i><i class="p">({</i> <i class="t">port</i><i class="p">:</i> <i class="n">8082</i> <i class="p">});</i>

<i class="w">wss</i><i class="p">.</i><i class="f">on</i><i class="p">("</i><i class="s">connection</i><i class="p">",</i> <i class="r">ws</i> <i class="k">=&gt;</i> <i class="p">{</i>
    <i class="r">console</i><i class="p">.</i><i class="f">log</i><i class="p">("</i><i class="s">New client connected!</i><i class="p">");</i>

    <i class="r">ws</i><i class="p">.</i><i class="f">on</i><i class="p">("</i><i class="s">message</i><i class="p">",</i> <i class="o">data</i> <i class="k">=&gt;</i> <i class="p">{</i>
        <i class="r">console</i><i class="p">.</i><i class="f">log</i><i class="p">(`</i><i class="s">Client has send us: </i><i class="p">${</i><i class="r">data</i><i class="p">}`);</i>

        <i class="p">if</i> <i class="p">(</i><i class="r">data</i> <i class="k">==</i> <i class="p">"</i><i class="s">addImposter</i><i class="p">")</i> <i class="p">{</i>
            <i class="r">ws</i><i class="p">.</i><i class="f">send</i><i class="p">("</i><i class="s">addImposterEvent</i><i class="p">");</i>
        <i class="p">}</i> <i class="p">else</i> <i class="p">if</i> <i class="p">(</i><i class="r">data</i> <i class="k">==</i> <i class="p">"</i><i class="s">addCrewmate</i><i class="p">")</i> <i class="p">{</i>
            <i class="r">ws</i><i class="p">.</i><i class="f">send</i><i class="p">("</i><i class="s">addCrewmateEvent</i><i class="p">");</i>
        <i class="p">}</i> <i class="p">else</i> <i class="p">if</i> <i class="p">(</i><i class="r">data</i> <i class="k">==</i> <i class="p">"</i><i class="s">resetCounter</i><i class="p">")</i> <i class="p">{</i>
            <i class="r">ws</i><i class="p">.</i><i class="f">send</i><i class="p">("</i><i class="s">resetCounterEvent</i><i class="p">");</i>
        <i class="p">}</i>
    <i class="p">});</i>

    <i class="r">ws</i><i class="p">.</i><i class="f">on</i><i class="p">("</i><i class="s">close</i><i class="p">",</i> <i class="p">()</i> <i class="k">=&gt;</i> <i class="p">{</i>
        <i class="r">console</i><i class="p">.</i><i class="f">log</i><i class="p">("</i><i class="s">Client has disconnected!</i><i class="p">");</i>
    <i class="p">});</i>
<i class="p">});</i></pre>
<pre class="ln" style="left:1443px;top:88px">1
2
3
4
5
6
7
8
9
10
11
12
13
14
15
<i>16</i>
17
18
19
20
21
22
23</pre>
<div style="left:1648px;top:103px;width:10px;height:0;border-top:1.500px dotted #aab;background:none"></div>
<svg style="left:1511px;top:372px;" width="12" height="16" viewBox="0 0 12 16"><path d="M6 1a4.600 4.600 0 0 0-2.800 8.200c.5.500.8 1 .8 1.800h4c0-.8.300-1.300.8-1.800A4.600 4.600 0 0 0 6 1z" fill="#ffcc00"/><path d="M4 12h4v2.500H4z" fill="#ffcc00"/><rect x="5.200" y="12.800" width="1.600" height=".9" fill="#090a10"/></svg>
<div style="left:2434px;top:117px;width:112px;height:2px;background:#1a2a44;"></div>
<svg style="left:2434px;top:87px;" width="112" height="50" viewBox="0 0 112 50"><g opacity=".55"><rect x="0" y="0.2" width="5" height="1.400" fill="#c792ea"/><rect x="6" y="0.2" width="9" height="1.400" fill="#eeffff"/><rect x="16" y="0.2" width="1" height="1.400" fill="#c792ea"/><rect x="18" y="0.2" width="7" height="1.400" fill="#82aaff"/><rect x="25" y="0.2" width="1" height="1.400" fill="#89ddff"/><rect x="26" y="0.2" width="1" height="1.400" fill="#89ddff"/><rect x="27" y="0.2" width="2" height="1.400" fill="#c3e88d"/><rect x="29" y="0.2" width="1" height="1.400" fill="#89ddff"/><rect x="30" y="0.2" width="1" height="1.400" fill="#89ddff"/><rect x="31" y="0.2" width="1" height="1.400" fill="#89ddff"/><rect x="0" y="4.2" width="5" height="1.400" fill="#c792ea"/><rect x="6" y="4.2" width="3" height="1.400" fill="#eeffff"/><rect x="10" y="4.2" width="1" height="1.400" fill="#c792ea"/><rect x="12" y="4.2" width="3" height="1.400" fill="#c792ea"/><rect x="16" y="4.2" width="9" height="1.400" fill="#ffcb6b"/><rect x="25" y="4.2" width="1" height="1.400" fill="#89ddff"/><rect x="26" y="4.2" width="6" height="1.400" fill="#ffcb6b"/><rect x="32" y="4.2" width="1" height="1.400" fill="#89ddff"/><rect x="33" y="4.2" width="1" height="1.400" fill="#89ddff"/><rect x="35" y="4.2" width="4" height="1.400" fill="#c5cde8"/><rect x="39" y="4.2" width="1" height="1.400" fill="#89ddff"/><rect x="41" y="4.2" width="4" height="1.400" fill="#f78c6c"/><rect x="46" y="4.2" width="1" height="1.400" fill="#89ddff"/><rect x="47" y="4.2" width="1" height="1.400" fill="#89ddff"/><rect x="48" y="4.2" width="1" height="1.400" fill="#89ddff"/><rect x="0" y="8.2" width="3" height="1.400" fill="#eeffff"/><rect x="3" y="8.2" width="1" height="1.400" fill="#89ddff"/><rect x="4" y="8.2" width="2" height="1.400" fill="#82aaff"/><rect x="6" y="8.2" width="1" height="1.400" fill="#89ddff"/><rect x="7" y="8.2" width="1" height="1.400" fill="#89ddff"/><rect x="8" y="8.2" width="10" height="1.400" fill="#c3e88d"/><rect x="18" y="8.2" width="1" height="1.400" fill="#89ddff"/><rect x="19" y="8.2" width="1" height="1.400" fill="#89ddff"/><rect x="21" y="8.2" width="2" height="1.400" fill="#f07178"/><rect x="24" y="8.2" width="2" height="1.400" fill="#c792ea"/><rect x="27" y="8.2" width="1" height="1.400" fill="#89ddff"/><rect x="4" y="10.2" width="7" height="1.400" fill="#f07178"/><rect x="11" y="10.2" width="1" height="1.400" fill="#89ddff"/><rect x="12" y="10.2" width="3" height="1.400" fill="#82aaff"/><rect x="15" y="10.2" width="1" height="1.400" fill="#89ddff"/><rect x="16" y="10.2" width="1" height="1.400" fill="#89ddff"/><rect x="17" y="10.2" width="3" height="1.400" fill="#c3e88d"/><rect x="21" y="10.2" width="6" height="1.400" fill="#c3e88d"/><rect x="28" y="10.2" width="10" height="1.400" fill="#c3e88d"/><rect x="38" y="10.2" width="1" height="1.400" fill="#89ddff"/><rect x="39" y="10.2" width="1" height="1.400" fill="#89ddff"/><rect x="40" y="10.2" width="1" height="1.400" fill="#89ddff"/><rect x="4" y="14.2" width="2" height="1.400" fill="#f07178"/><rect x="6" y="14.2" width="1" height="1.400" fill="#89ddff"/><rect x="7" y="14.2" width="2" height="1.400" fill="#82aaff"/><rect x="9" y="14.2" width="1" height="1.400" fill="#89ddff"/><rect x="10" y="14.2" width="1" height="1.400" fill="#89ddff"/><rect x="11" y="14.2" width="7" height="1.400" fill="#c3e88d"/><rect x="18" y="14.2" width="1" height="1.400" fill="#89ddff"/><rect x="19" y="14.2" width="1" height="1.400" fill="#89ddff"/><rect x="21" y="14.2" width="4" height="1.400" fill="#f07178"/><rect x="26" y="14.2" width="2" height="1.400" fill="#c792ea"/><rect x="29" y="14.2" width="1" height="1.400" fill="#89ddff"/><rect x="8" y="16.2" width="7" height="1.400" fill="#f07178"/><rect x="15" y="16.2" width="1" height="1.400" fill="#89ddff"/><rect x="16" y="16.2" width="3" height="1.400" fill="#82aaff"/><rect x="19" y="16.2" width="1" height="1.400" fill="#89ddff"/><rect x="20" y="16.2" width="1" height="1.400" fill="#89ddff"/><rect x="21" y="16.2" width="6" height="1.400" fill="#c3e88d"/><rect x="28" y="16.2" width="3" height="1.400" fill="#c3e88d"/><rect x="32" y="16.2" width="4" height="1.400" fill="#c3e88d"/><rect x="37" y="16.2" width="3" height="1.400" fill="#c3e88d"/><rect x="41" y="16.2" width="2" height="1.400" fill="#89ddff"/><rect x="43" y="16.2" width="4" height="1.400" fill="#f07178"/><rect x="47" y="16.2" width="1" height="1.400" fill="#89ddff"/><rect x="48" y="16.2" width="1" height="1.400" fill="#89ddff"/><rect x="49" y="16.2" width="1" height="1.400" fill="#89ddff"/><rect x="50" y="16.2" width="1" height="1.400" fill="#89ddff"/><rect x="8" y="20.2" width="2" height="1.400" fill="#89ddff"/><rect x="11" y="20.2" width="1" height="1.400" fill="#89ddff"/><rect x="12" y="20.2" width="4" height="1.400" fill="#f07178"/><rect x="17" y="20.2" width="2" height="1.400" fill="#c792ea"/><rect x="20" y="20.2" width="1" height="1.400" fill="#89ddff"/><rect x="21" y="20.2" width="11" height="1.400" fill="#c3e88d"/><rect x="32" y="20.2" width="1" height="1.400" fill="#89ddff"/><rect x="33" y="20.2" width="1" height="1.400" fill="#89ddff"/><rect x="35" y="20.2" width="1" height="1.400" fill="#89ddff"/><rect x="12" y="22.2" width="2" height="1.400" fill="#f07178"/><rect x="14" y="22.2" width="1" height="1.400" fill="#89ddff"/><rect x="15" y="22.2" width="4" height="1.400" fill="#82aaff"/><rect x="19" y="22.2" width="1" height="1.400" fill="#89ddff"/><rect x="20" y="22.2" width="1" height="1.400" fill="#89ddff"/><rect x="21" y="22.2" width="16" height="1.400" fill="#c3e88d"/><rect x="37" y="22.2" width="1" height="1.400" fill="#89ddff"/><rect x="38" y="22.2" width="1" height="1.400" fill="#89ddff"/><rect x="39" y="22.2" width="1" height="1.400" fill="#89ddff"/><rect x="8" y="24.2" width="1" height="1.400" fill="#89ddff"/><rect x="10" y="24.2" width="4" height="1.400" fill="#89ddff"/><rect x="15" y="24.2" width="2" height="1.400" fill="#89ddff"/><rect x="18" y="24.2" width="1" height="1.400" fill="#89ddff"/><rect x="19" y="24.2" width="4" height="1.400" fill="#f07178"/><rect x="24" y="24.2" width="2" height="1.400" fill="#c792ea"/><rect x="27" y="24.2" width="1" height="1.400" fill="#89ddff"/><rect x="28" y="24.2" width="11" height="1.400" fill="#c3e88d"/><rect x="39" y="24.2" width="1" height="1.400" fill="#89ddff"/><rect x="40" y="24.2" width="1" height="1.400" fill="#89ddff"/><rect x="42" y="24.2" width="1" height="1.400" fill="#89ddff"/><rect x="12" y="26.2" width="2" height="1.400" fill="#f07178"/><rect x="14" y="26.2" width="1" height="1.400" fill="#89ddff"/><rect x="15" y="26.2" width="4" height="1.400" fill="#82aaff"/><rect x="19" y="26.2" width="1" height="1.400" fill="#89ddff"/><rect x="20" y="26.2" width="1" height="1.400" fill="#89ddff"/><rect x="21" y="26.2" width="16" height="1.400" fill="#c3e88d"/><rect x="37" y="26.2" width="1" height="1.400" fill="#89ddff"/><rect x="38" y="26.2" width="1" height="1.400" fill="#89ddff"/><rect x="39" y="26.2" width="1" height="1.400" fill="#89ddff"/><rect x="8" y="28.2" width="1" height="1.400" fill="#89ddff"/><rect x="10" y="28.2" width="4" height="1.400" fill="#89ddff"/><rect x="15" y="28.2" width="2" height="1.400" fill="#89ddff"/><rect x="18" y="28.2" width="1" height="1.400" fill="#89ddff"/><rect x="19" y="28.2" width="4" height="1.400" fill="#f07178"/><rect x="24" y="28.2" width="2" height="1.400" fill="#c792ea"/><rect x="27" y="28.2" width="1" height="1.400" fill="#89ddff"/><rect x="28" y="28.2" width="12" height="1.400" fill="#c3e88d"/><rect x="40" y="28.2" width="1" height="1.400" fill="#89ddff"/><rect x="41" y="28.2" width="1" height="1.400" fill="#89ddff"/><rect x="43" y="28.2" width="1" height="1.400" fill="#89ddff"/><rect x="12" y="30.2" width="2" height="1.400" fill="#f07178"/><rect x="14" y="30.2" width="1" height="1.400" fill="#89ddff"/><rect x="15" y="30.2" width="4" height="1.400" fill="#82aaff"/><rect x="19" y="30.2" width="1" height="1.400" fill="#89ddff"/><rect x="20" y="30.2" width="1" height="1.400" fill="#89ddff"/><rect x="21" y="30.2" width="17" height="1.400" fill="#c3e88d"/><rect x="38" y="30.2" width="1" height="1.400" fill="#89ddff"/><rect x="39" y="30.2" width="1" height="1.400" fill="#89ddff"/><rect x="40" y="30.2" width="1" height="1.400" fill="#89ddff"/><rect x="8" y="32.2" width="1" height="1.400" fill="#89ddff"/><rect x="4" y="34.2" width="1" height="1.400" fill="#89ddff"/><rect x="5" y="34.2" width="1" height="1.400" fill="#89ddff"/><rect x="6" y="34.2" width="1" height="1.400" fill="#89ddff"/><rect x="4" y="38.2" width="2" height="1.400" fill="#f07178"/><rect x="6" y="38.2" width="1" height="1.400" fill="#89ddff"/><rect x="7" y="38.2" width="2" height="1.400" fill="#82aaff"/><rect x="9" y="38.2" width="1" height="1.400" fill="#89ddff"/><rect x="10" y="38.2" width="1" height="1.400" fill="#89ddff"/><rect x="11" y="38.2" width="5" height="1.400" fill="#c3e88d"/><rect x="16" y="38.2" width="1" height="1.400" fill="#89ddff"/><rect x="17" y="38.2" width="1" height="1.400" fill="#89ddff"/><rect x="19" y="38.2" width="1" height="1.400" fill="#89ddff"/><rect x="20" y="38.2" width="1" height="1.400" fill="#89ddff"/><rect x="22" y="38.2" width="2" height="1.400" fill="#c792ea"/><rect x="25" y="38.2" width="1" height="1.400" fill="#89ddff"/><rect x="8" y="40.2" width="7" height="1.400" fill="#f07178"/><rect x="15" y="40.2" width="1" height="1.400" fill="#89ddff"/><rect x="16" y="40.2" width="3" height="1.400" fill="#82aaff"/><rect x="19" y="40.2" width="1" height="1.400" fill="#89ddff"/><rect x="20" y="40.2" width="1" height="1.400" fill="#89ddff"/><rect x="21" y="40.2" width="6" height="1.400" fill="#c3e88d"/><rect x="28" y="40.2" width="3" height="1.400" fill="#c3e88d"/><rect x="32" y="40.2" width="13" height="1.400" fill="#c3e88d"/><rect x="45" y="40.2" width="1" height="1.400" fill="#89ddff"/><rect x="46" y="40.2" width="1" height="1.400" fill="#89ddff"/><rect x="47" y="40.2" width="1" height="1.400" fill="#89ddff"/><rect x="4" y="42.2" width="1" height="1.400" fill="#89ddff"/><rect x="5" y="42.2" width="1" height="1.400" fill="#89ddff"/><rect x="6" y="42.2" width="1" height="1.400" fill="#89ddff"/><rect x="0" y="44.2" width="1" height="1.400" fill="#89ddff"/><rect x="1" y="44.2" width="1" height="1.400" fill="#89ddff"/><rect x="2" y="44.2" width="1" height="1.400" fill="#89ddff"/></g></svg>
<div style="left:2546px;top:87px;width:1px;height:671px;background:#262628;"></div>
<div style="left:2546px;top:87px;width:14px;height:1px;background:#262628;"></div>
<div style="left:2547px;top:261px;width:13px;height:1.5px;background:#89a4ff;"></div>
<div style="left:2551px;top:263px;width:5px;height:10px;background:#8a8d99;"></div>
<div style="left:322px;top:758px;width:2238px;height:1px;background:#14182b;"></div>
<span class="s11" style="left:342px;top:767px;line-height:20px;letter-spacing:-0.35px;transform:scaleX(0.9344);transform-origin:0 50%;">PROBLEMS</span>
<span class="s11" style="left:416px;top:767px;line-height:20px;letter-spacing:-0.35px;transform:scaleX(0.9624);transform-origin:0 50%;">OUTPUT</span>
<span class="s11" style="left:477px;top:767px;line-height:20px;letter-spacing:-0.35px;transform:scaleX(0.9462);transform-origin:0 50%;">DEBUG CONSOLE</span>
<span class="s11" style="left:582px;top:767px;line-height:20px;color:#c9d3ff;letter-spacing:-0.452px;">TERMINAL</span>
<div style="left:582px;top:790px;width:52px;height:1px;background:#89a4ff;"></div>
<div style="left:2212px;top:765px;width:170px;height:23px;background:#141629;"></div>
<span class="ui" style="left:2221px;top:768px;line-height:20px;color:#7f8fca;letter-spacing:0.108px;">2: powershell</span>
<svg style="left:2362px;top:773px;" width="12" height="8" viewBox="0 0 12 8"><path d="M1 1.500 6 6.500 11 1.500" fill="none" stroke="#4b5cae" stroke-width="1.1"/></svg>
<svg style="left:2398px;top:769px;" width="14" height="14" viewBox="0 0 14 14"><path d="M7 .500v13M.500 7h13" stroke="#5f7ee0" stroke-width="1.100"/></svg>
<svg style="left:2431px;top:769px;" width="14" height="14" viewBox="0 0 14 14"><rect x=".600" y=".600" width="12.800" height="12.300" rx=".8" fill="none" stroke="#5f7ee0" stroke-width="1.1"/><path d="M7 .600v12.300" stroke="#5f7ee0" stroke-width="1.1"/></svg>
<svg style="left:2463px;top:768px;" width="12" height="15" viewBox="0 0 12 15"><path d="M.500 3h11M4 3V1h4v2M1.500 3v10.500h9V3M4.200 5.500v6M6 5.500v6M7.800 5.500v6" fill="none" stroke="#5f7ee0" stroke-width="1.100"/></svg>
<svg style="left:2496px;top:772px;" width="12" height="8" viewBox="0 0 12 8"><path d="M1 6.500 6 1.500 11 6.500" fill="none" stroke="#5f7ee0" stroke-width="1.100"/></svg>
<svg style="left:2529px;top:772px;" width="10" height="10" viewBox="0 0 10 10"><path d="M.500 .500l9 9M9.500 .500l-9 9" stroke="#5f7ee0" stroke-width="1.100"/></svg>
<pre class="term" style="left:342px;top:797.600px">PS D:\xampp\htdocs\royalistiq\server&gt; <i style="color:#f5f543">node</i> index.js
New client connected!
Client has send us: addImposter
Client has disconnected!
New client connected!
Client has send us: addImposter
PS D:\xampp\htdocs\royalistiq\server&gt; </pre>
<div style="left:608px;top:900.500px;width:7px;height:16px;border:1px solid #b9c6ff"></div>
<div style="left:0px;top:1377px;width:2560px;height:1px;background:#000;"></div>
<div style="left:0px;top:1378px;width:2560px;height:22px;background:#89a5ff;"></div>
<svg style="left:15px;top:1382px;" width="14" height="14" viewBox="0 0 14 14"><circle cx="7" cy="7" r="6" fill="none" stroke="#0d0f1a" stroke-width="1"/><path d="M4.500 4.500l5 5M9.500 4.500l-5 5" stroke="#0d0f1a" stroke-width="1"/></svg>
<span class="s12" style="left:32.5px;top:1380px;line-height:20px;color:#0d0f1a;">0</span>
<svg style="left:43px;top:1382px;" width="13" height="13" viewBox="0 0 13 13"><path d="M6.500 1 12.300 12H.700z" fill="none" stroke="#0d0f1a" stroke-width="1"/><path d="M6.500 5v4M6.500 10v1.200" stroke="#0d0f1a" stroke-width="1"/></svg>
<span class="s12" style="left:59.5px;top:1380px;line-height:20px;color:#0d0f1a;">0</span>
<span class="s12" style="left:2145px;top:1380px;line-height:20px;color:#0d0f1a;letter-spacing:-0.174px;">Ln 17, Col 1 (119 selected)</span>
<span class="s12" style="left:2299px;top:1380px;line-height:20px;color:#0d0f1a;letter-spacing:-0.430px;">Spaces: 4</span>
<span class="s12" style="left:2364px;top:1380px;line-height:20px;color:#0d0f1a;letter-spacing:-0.299px;">UTF-8</span>
<span class="s12" style="left:2412px;top:1380px;line-height:20px;color:#0d0f1a;letter-spacing:-0.35px;transform:scaleX(0.9019);transform-origin:0 50%;">CRLF</span>
<span class="s12" style="left:2454px;top:1380px;line-height:20px;color:#0d0f1a;letter-spacing:-0.292px;">HTML</span>
<svg style="left:2501px;top:1382px;" width="14" height="14" viewBox="0 0 14 14"><circle cx="5" cy="5.500" r="2.200" fill="none" stroke="#0d0f1a" stroke-width="1"/><path d="M1 13c0-3 1.500-4.500 4-4.500s3 1 3.500 2M7 1.500h6.500v6H11l-1.500 1.500V7.500" fill="none" stroke="#0d0f1a" stroke-width="1"/></svg>
<svg style="left:2531px;top:1382px;" width="13" height="14" viewBox="0 0 13 14"><path d="M6.500 1.500c-2.500 0-4 1.800-4 4.500v3L1 11h11l-1.500-2V6c0-2.700-1.500-4.500-4-4.500zM5 12.500c.300 1 2.700 1 3 0" fill="none" stroke="#0d0f1a" stroke-width="1"/></svg>
</div></body></html>
